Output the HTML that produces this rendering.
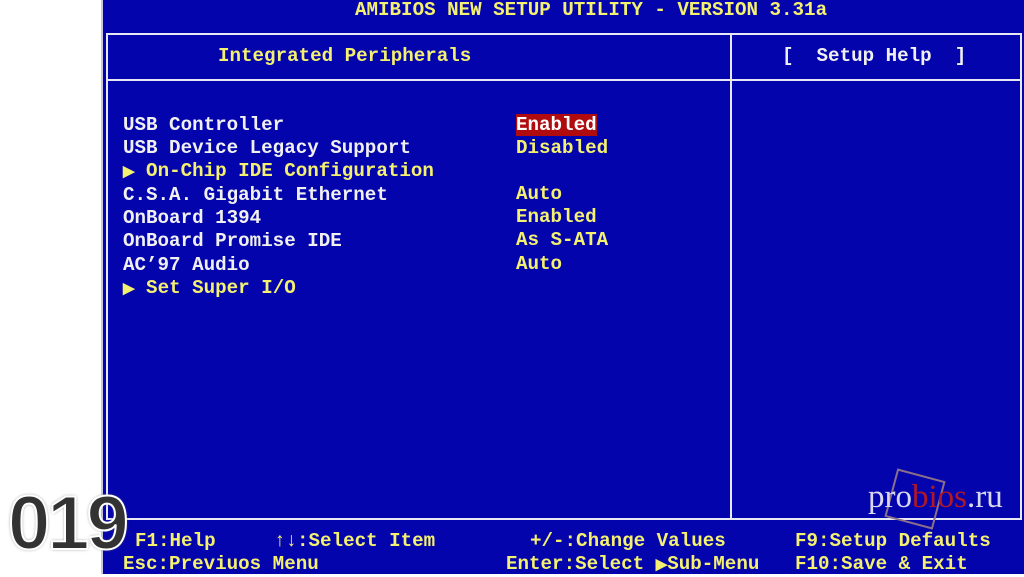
<!DOCTYPE html>
<html><head><meta charset="utf-8"><style>
html,body{margin:0;padding:0}
body{width:1024px;height:574px;overflow:hidden;background:#fff;position:relative;font-family:"Liberation Mono",monospace;font-weight:bold;font-size:19.2px}
#bg{position:absolute;left:101px;top:0;width:923px;height:574px;background:#0404ac}
.l{position:absolute;background:#e8e8f4}
.t{position:absolute;white-space:pre;line-height:23.1px}
.w{color:#f0f0f0}.y{color:#f4f070}
.hl{background:#b00c10;color:#fff}
</style></head><body>
<div id="bg"></div>
<div class="l" style="left:101px;top:0;width:2px;height:574px;background:#c8c8e0"></div>
<div class="l" style="left:106px;top:33px;width:916px;height:2px"></div>
<div class="l" style="left:106px;top:79px;width:916px;height:2px"></div>
<div class="l" style="left:106px;top:518px;width:916px;height:2px"></div>
<div class="l" style="left:106px;top:33px;width:2px;height:487px"></div>
<div class="l" style="left:730px;top:33px;width:2px;height:487px"></div>
<div class="l" style="left:1020px;top:33px;width:2px;height:487px"></div>

<div class="t y" style="left:355px;top:-1px">AMIBIOS NEW SETUP UTILITY - VERSION 3.31a</div>
<div class="t y" style="left:218px;top:45px">Integrated Peripherals</div>
<div class="t w" style="left:782px;top:45px">[  Setup Help  ]</div>

<div class="t w" style="left:123px;top:114px">USB Controller
USB Device Legacy Support
<span class="y"><span style="font-size:15px">▶</span> On-Chip IDE Configuration</span>
C.S.A. Gigabit Ethernet
OnBoard 1394
OnBoard Promise IDE
AC’97 Audio
<span class="y"><span style="font-size:15px">▶</span> Set Super I/O</span></div>
<div class="t y" style="left:516px;top:114px"><span class="hl">Enabled</span>
Disabled

Auto
Enabled
As S-ATA
Auto</div>

<div class="t y" style="left:135px;top:530px">F1:Help</div>
<div class="t y" style="left:274px;top:530px">↑↓:Select Item</div>
<div class="t y" style="left:530px;top:530px">+/-:Change Values</div>
<div class="t y" style="left:795px;top:530px">F9:Setup Defaults</div>
<div class="t y" style="left:123px;top:553px">Esc:Previuos Menu</div>
<div class="t y" style="left:506px;top:553px">Enter:Select <span style="font-size:15px">▶</span>Sub-Menu</div>
<div class="t y" style="left:795px;top:553px">F10:Save &amp; Exit</div>

<div style="position:absolute;left:890px;top:474px;width:46px;height:46px;border:2px solid #8a7088;transform:rotate(15deg)"></div>
<div style="position:absolute;left:868px;top:479px;font-family:'Liberation Serif',serif;font-weight:normal;font-size:33px;color:#d8d8f0">pro<span style="color:#b01828">bios</span>.ru</div>

<div style="position:absolute;left:8px;top:486px;font-family:'Liberation Sans',sans-serif;font-weight:bold;font-size:76px;line-height:76px;color:#333;-webkit-text-stroke:2px #fff;text-shadow:0 0 3px #666;letter-spacing:-3px">019</div>
</body></html>
